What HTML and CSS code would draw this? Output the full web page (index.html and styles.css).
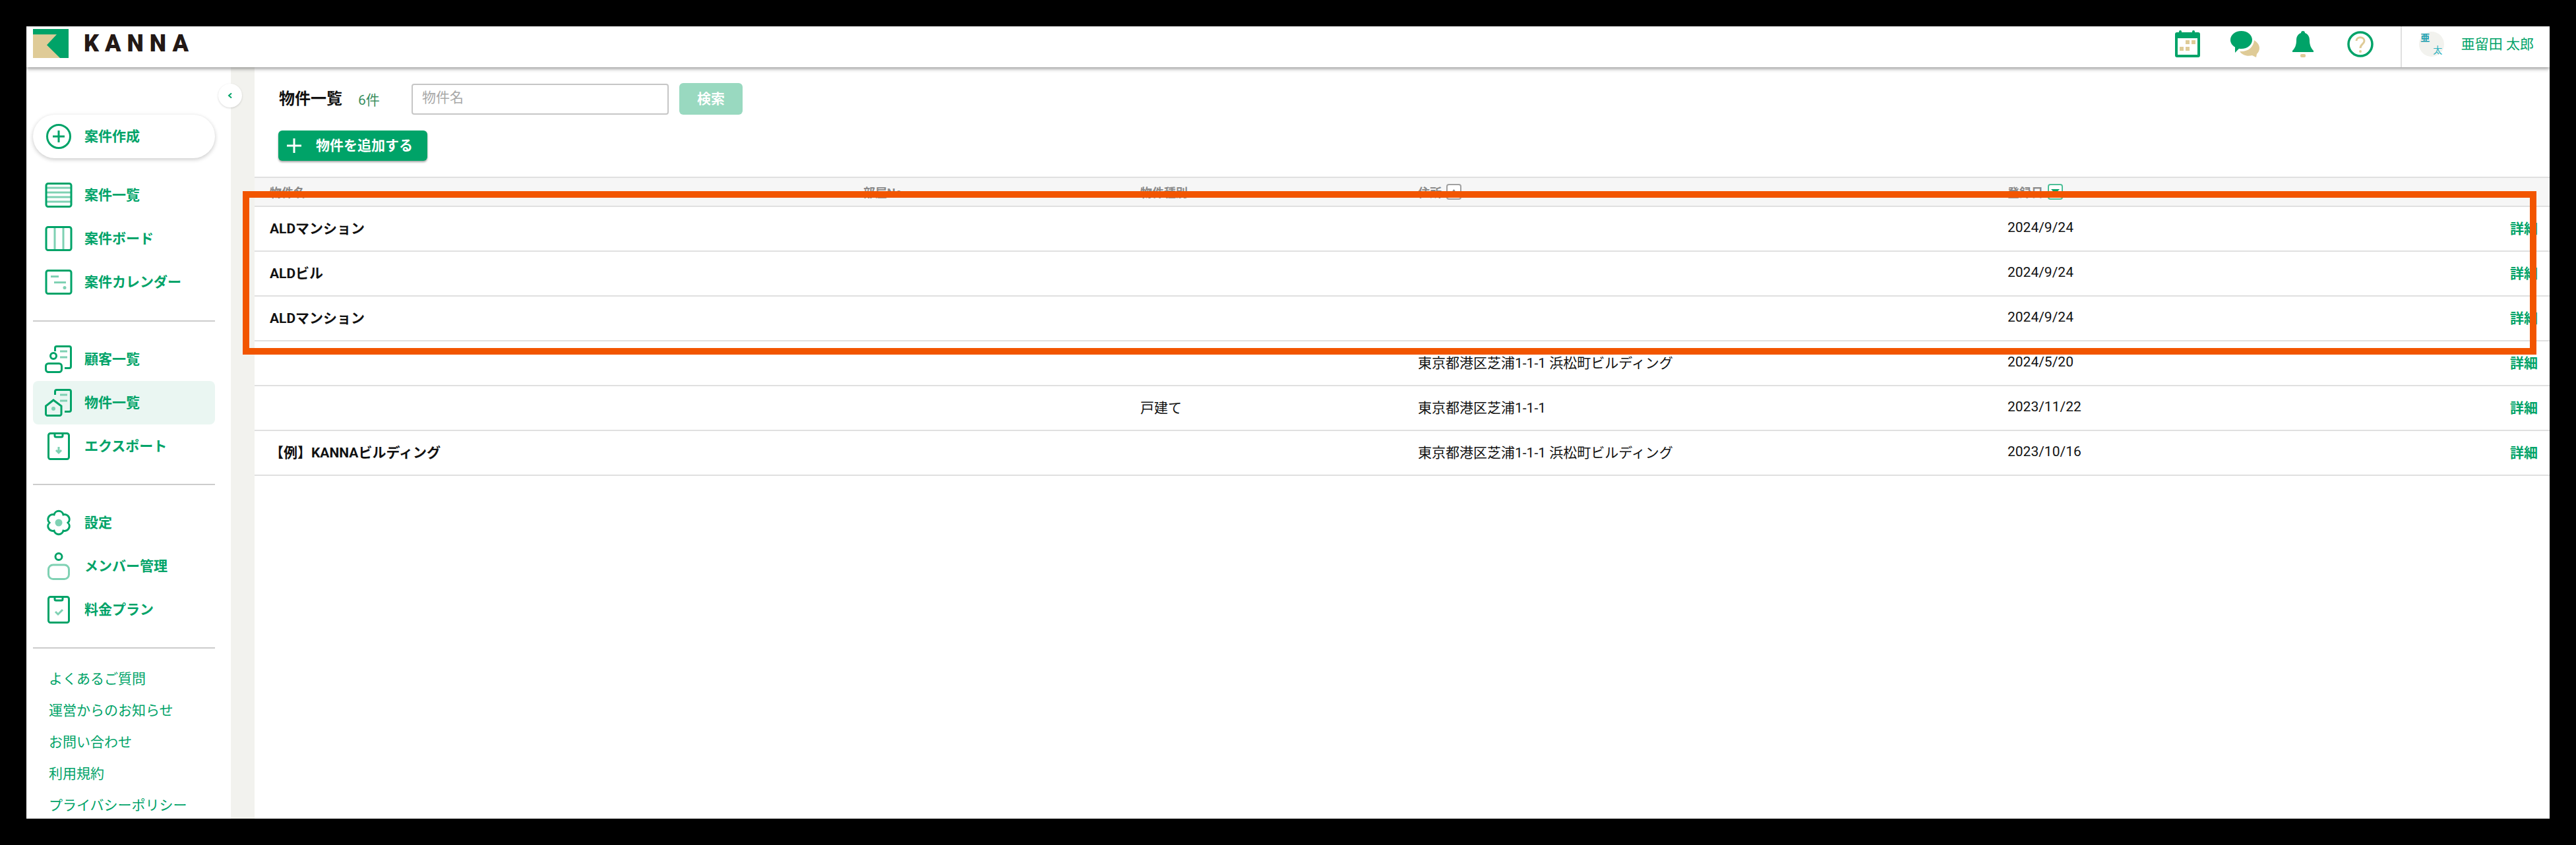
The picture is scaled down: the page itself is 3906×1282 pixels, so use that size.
FILE: index.html
```html
<!DOCTYPE html>
<html lang="ja">
<head>
<meta charset="utf-8">
<title>物件一覧 - KANNA</title>
<link rel="stylesheet" href="styles.css">
</head>
<body>
<div class="frame">
  <header class="topbar">
    <div class="brand">
      <svg class="logo" viewBox="0 0 54 44"><rect width="54" height="44" fill="#00a368"/><polygon points="0,8.3 36,8.3 21,24.3 41,44 0,44" fill="#dfcb97"/></svg>
      <span class="wordmark">KANNA</span>
    </div>
    <div class="top-actions">
      <div class="hslot">
        <svg class="h-cal" viewBox="0 0 38 41"><rect x="6" y="0" width="4" height="6" rx="2" fill="#00a368"/><rect x="26" y="0" width="4" height="6" rx="2" fill="#00a368"/><rect x="0" y="3" width="38" height="38" rx="3" fill="#00a368"/><rect x="4" y="12" width="30" height="25" fill="#fff"/><rect x="16" y="15" width="6" height="6" fill="#dfcb97"/><rect x="25" y="15" width="6" height="6" fill="#dfcb97"/><rect x="7" y="25" width="6" height="6" fill="#dfcb97"/><rect x="16" y="25" width="6" height="6" fill="#dfcb97"/></svg>
      </div>
      <div class="hslot">
        <svg class="h-chat" viewBox="0 0 44 40"><path d="M36 14 C42 18 44 22 44 26 C44 30 42 33 40 35 L39 40 L33 37 C26 39 18 37 14 31 C26 32 35 25 36 14Z" fill="#dfcb97"/><path d="M16.500 0 C26 0 33 6 33 13.500 C33 21 26 27 16.500 27 C15 27 14 27 13 26.800 L7 33 L7 24.500 C2.500 22 0 18 0 13.500 C0 6 7 0 16.500 0Z" fill="#00a368"/></svg>
      </div>
      <div class="hslot">
        <svg class="h-bell" viewBox="0 0 32 40"><path d="M16 0 C18 0 19 1 19 3 C24 5 26 9 26 14 C26 21 28 26 32 30 V32 H0 V30 C4 26 6 21 6 14 C6 9 8 5 13 3 C13 1 14 0 16 0Z" fill="#00a368"/><rect x="12" y="35" width="8" height="5" rx="2" fill="#dfcb97"/></svg>
      </div>
      <div class="hslot">
        <svg class="h-help" viewBox="0 0 40 40"><circle cx="20" cy="20" r="18" fill="none" stroke="#00a368" stroke-width="3.500"/><path d="M14 15 C14 8 26 8 26 15 C26 20 20 20 20 26" fill="none" stroke="#dfcb97" stroke-width="3"/><circle cx="20" cy="31" r="2" fill="#dfcb97"/></svg>
      </div>
      <div class="user">
        <div class="avatar"><span class="av-a">亜</span><span class="av-b">太</span></div>
        <span class="user-name">亜留田 太郎</span>
      </div>
    </div>
  </header>

  <div class="body-row">
    <aside class="sidebar">
      <a class="pill">
        <svg class="ic" viewBox="0 0 42 42"><circle cx="21" cy="21" r="17.500"/><path d="M21 12V30M12 21H30"/></svg>
        <span>案件作成</span>
      </a>
      <nav class="group">
        <a class="item"><svg class="ic" viewBox="0 0 42 42"><path class="lt" d="M3 10H39M3 17H39M3 24H39M3 31H39"/><rect x="2" y="3.500" width="38" height="35" rx="3"/></svg><span>案件一覧</span></a>
        <a class="item"><svg class="ic" viewBox="0 0 42 42"><path class="lt" d="M15 4V38M28 4V38"/><rect x="2" y="3.500" width="38" height="35" rx="3"/></svg><span>案件ボード</span></a>
        <a class="item"><svg class="ic" viewBox="0 0 42 42"><path class="lt" d="M9 12.500H21M14 21.500H32"/><circle class="fl" cx="30" cy="29.500" r="2.500"/><rect x="2" y="3.500" width="38" height="35" rx="3"/></svg><span>案件カレンダー</span></a>
      </nav>
      <div class="divider divider-first"></div>
      <nav class="group">
        <a class="item"><svg class="ic" viewBox="0 0 42 42"><path d="M15.500 9V4A2.500 2.500 0 0 1 18 1.500H37A2.500 2.500 0 0 1 39.500 4V32A2.500 2.500 0 0 1 37 34.500H30"/><path class="lt" d="M23 9H34M23 18H34"/><circle cx="13" cy="16" r="4.500"/><rect x="1.500" y="27.500" width="24" height="13" rx="4"/></svg><span>顧客一覧</span></a>
        <a class="item active"><svg class="ic" viewBox="0 0 42 42"><path d="M15.500 9V4A2.500 2.500 0 0 1 18 1.500H37A2.500 2.500 0 0 1 39.500 4V32A2.500 2.500 0 0 1 37 34.500H30"/><path class="lt" d="M23 9H34M23 18H34"/><path d="M13 17L25 26V38A2.500 2.500 0 0 1 22.500 40.500H4A2.500 2.500 0 0 1 1.500 38V26Z"/><circle class="fl" cx="13" cy="30" r="3"/></svg><span>物件一覧</span></a>
        <a class="item"><svg class="ic" viewBox="0 0 42 42"><rect x="5.500" y="1.500" width="31" height="39" rx="3"/><path d="M15 2V5A2 2 0 0 0 17 7H25A2 2 0 0 0 27 5V2"/><path class="lt" d="M21 22V31M17 27L21 31L25 27"/></svg><span>エクスポート</span></a>
      </nav>
      <div class="divider"></div>
      <nav class="group">
        <a class="item"><svg class="ic" viewBox="0 0 42 42"><path d="M14 8.880A7.200 7.200 0 0 1 28 8.880A7.200 7.200 0 0 1 35 21A7.200 7.200 0 0 1 28 33.120A7.200 7.200 0 0 1 14 33.120A7.200 7.200 0 0 1 7 21A7.200 7.200 0 0 1 14 8.880Z"/><circle class="fl" cx="21" cy="21" r="5.500"/></svg><span>設定</span></a>
        <a class="item"><svg class="ic" viewBox="0 0 42 42"><circle cx="21" cy="6.500" r="5"/><rect class="lt" x="5.500" y="19" width="31" height="21.500" rx="7"/></svg><span>メンバー管理</span></a>
        <a class="item"><svg class="ic" viewBox="0 0 42 42"><rect x="5.500" y="1.500" width="31" height="39" rx="3"/><path d="M15 2V5A2 2 0 0 0 17 7H25A2 2 0 0 0 27 5V2"/><path class="lt" d="M16 24L20 28L27 21"/></svg><span>料金プラン</span></a>
      </nav>
      <div class="divider divider-last"></div>
      <nav class="links">
        <a>よくあるご質問</a>
        <a>運営からのお知らせ</a>
        <a>お問い合わせ</a>
        <a>利用規約</a>
        <a>プライバシーポリシー</a>
      </nav>
    </aside>

    <div class="gutter"></div>

    <main class="content">
      <div class="toolbar">
        <h1 class="title">物件一覧</h1>
        <span class="count">6件</span>
        <input class="search" type="text" placeholder="物件名">
        <button class="search-btn" type="button">検索</button>
      </div>
      <button class="add-btn" type="button">
        <svg class="add-plus" viewBox="0 0 22 22"><path d="M11 0V22M0 11H22"/></svg>
        <span>物件を追加する</span>
      </button>

      <div class="table">
        <div class="row head">
          <div>物件名</div>
          <div>部屋No</div>
          <div>物件種別</div>
          <div class="sortable">住所<svg class="sort" viewBox="0 0 23 24"><rect x="1" y="1" width="21" height="22" rx="3"/><path class="tri" d="M11.500 8L16 14H7Z"/></svg></div>
          <div class="sortable">登録日<svg class="sort on" viewBox="0 0 23 24"><rect x="1" y="1" width="21" height="22" rx="3"/><path class="tri" d="M5 8H18L11.500 15Z"/></svg></div>
          <div></div>
        </div>
        <div class="row"><div class="name">ALDマンション</div><div></div><div></div><div></div><div>2024/9/24</div><div class="detail">詳細</div></div>
        <div class="row"><div class="name">ALDビル</div><div></div><div></div><div></div><div>2024/9/24</div><div class="detail">詳細</div></div>
        <div class="row"><div class="name">ALDマンション</div><div></div><div></div><div></div><div>2024/9/24</div><div class="detail">詳細</div></div>
        <div class="row"><div class="name"></div><div></div><div></div><div>東京都港区芝浦1-1-1 浜松町ビルディング</div><div>2024/5/20</div><div class="detail">詳細</div></div>
        <div class="row"><div class="name"></div><div></div><div>戸建て</div><div>東京都港区芝浦1-1-1</div><div>2023/11/22</div><div class="detail">詳細</div></div>
        <div class="row"><div class="name">【例】KANNAビルディング</div><div></div><div></div><div>東京都港区芝浦1-1-1 浜松町ビルディング</div><div>2023/10/16</div><div class="detail">詳細</div></div>
      </div>
    </main>
  </div>

  <button class="collapse" type="button" aria-label="閉じる"><svg viewBox="0 0 8 8"><path d="M6 0.500L2 4L6 7.500"/></svg></button>
  <div class="highlight"></div>
</div>
</body>
</html>
```
FILE: styles.css
```css
* { box-sizing: border-box; }
html, body { margin: 0; height: 100%; }
body {
  background: #000;
  padding: 40px;
  overflow: hidden;
  font-family: Roboto, "Noto Sans CJK JP", sans-serif;
  font-size: 21px;
  color: #111;
}
.frame {
  position: relative;
  width: 3826px;
  height: 1202px;
  background: #fff;
  overflow: hidden;
  display: flex;
  flex-direction: column;
}

/* top bar */
.topbar {
  position: relative;
  z-index: 2;
  height: 62px;
  flex: none;
  display: flex;
  justify-content: space-between;
  background: #fff;
  box-shadow: 0 2px 6px rgba(0, 0, 0, 0.45);
}
.brand {
  display: flex;
  align-items: center;
  gap: 23px;
  padding: 0 0 10px 10px;
}
.logo { width: 54px; height: 44px; display: block; }
.wordmark {
  font-family: Roboto, sans-serif;
  font-weight: 900;
  font-size: 36px;
  line-height: 1;
  letter-spacing: 9px;
  color: #231815;
}
.top-actions { display: flex; }
.hslot {
  width: 87.500px;
  display: flex;
  align-items: center;
  justify-content: center;
  padding-bottom: 9px;
}
.h-cal { width: 38px; height: 41px; }
.h-chat { width: 44px; height: 40px; }
.h-bell { width: 32px; height: 40px; }
.h-help { width: 40px; height: 40px; }
.user {
  margin-left: 17px;
  border-left: 2px solid #e0e0e0;
  display: flex;
  align-items: center;
  gap: 26px;
  padding: 0 24px 9px 26px;
}
.avatar {
  width: 38px;
  height: 38px;
  border-radius: 50%;
  background: #f2f2ee;
  display: grid;
  grid-template-columns: 1fr 1fr;
  grid-template-rows: 1fr 1fr;
  font-size: 14px;
  line-height: 1;
  color: #2fb3c0;
}
.av-a { grid-column: 1; grid-row: 1; font-weight: 700; color: #1e9fb0; align-self: center; justify-self: center; }
.av-b { grid-column: 2; grid-row: 2; align-self: center; justify-self: center; }
.user-name { color: #00a368; white-space: nowrap; padding-bottom: 4px; }

/* layout */
.body-row { flex: 1; display: flex; min-height: 0; }
.sidebar {
  width: 310px;
  flex: none;
  padding: 72px 24px 0 10px;
  overflow: hidden;
  color: #00a368;
  font-weight: 700;
}
.gutter { width: 36px; flex: none; background: #f2f2ee; }
.content { flex: 1; min-width: 0; padding-top: 24px; }

/* sidebar */
.ic { width: 42px; height: 42px; flex: none; fill: none; stroke: #00a368; stroke-width: 3; }
.ic .lt { stroke: #7fd1b3; }
.ic .fl { fill: #7fd1b3; stroke: none; }
.pill {
  height: 66px;
  border-radius: 33px;
  background: #fff;
  box-shadow: 0 2px 6px rgba(0, 0, 0, 0.22);
  display: flex;
  align-items: center;
  gap: 18px;
  padding-left: 18px;
  margin-bottom: 23px;
}
.pill span, .item span { padding-bottom: 5px; }
.item {
  height: 66px;
  display: flex;
  align-items: center;
  gap: 18px;
  padding-left: 18px;
  border-radius: 8px;
  white-space: nowrap;
}
.item.active { background: #eaf6f2; }
.divider { height: 2px; background: #cccccc; margin: 24px 0; }
.divider-first { margin-top: 25px; }
.divider-last { margin-bottom: 22px; }
.links { display: flex; flex-direction: column; font-weight: 400; }
.links a {
  height: 48px;
  padding: 0 0 4px 24px;
  display: flex;
  align-items: center;
  white-space: nowrap;
}

/* collapse button */
.collapse {
  position: absolute;
  left: 291px;
  top: 87px;
  z-index: 3;
  width: 36px;
  height: 36px;
  padding: 0;
  border: 0;
  border-radius: 50%;
  background: #fff;
  box-shadow: 0 1px 3px rgba(0, 0, 0, 0.16);
  display: flex;
  align-items: center;
  justify-content: center;
}
.collapse svg { width: 8px; height: 8px; fill: none; stroke: #00a368; stroke-width: 2; }

/* toolbar */
.toolbar { display: flex; align-items: center; height: 48px; padding-left: 37px; }
.title { margin: 0; font-size: 24px; font-weight: 700; line-height: 1; color: #111; }
.count { margin-left: 24px; color: #3a8f5f; width: 81px; flex: none; }
.search {
  width: 390px;
  height: 47px;
  border: 2px solid #c6c6c6;
  border-radius: 4px;
  padding: 0 14px 4px;
  font: inherit;
  outline: none;
}
.search::placeholder { color: #a8a8a8; opacity: 1; }
.search-btn {
  margin-left: 16px;
  width: 96px;
  height: 48px;
  border: 0;
  border-radius: 6px;
  background: #99d9c0;
  color: #fff;
  font: inherit;
  font-weight: 700;
  padding: 0 0 4px;
}
.add-btn {
  margin: 24px 0 24px 36px;
  width: 226px;
  height: 46px;
  border: 0;
  border-radius: 6px;
  background: #00a368;
  color: #fff;
  font: inherit;
  font-weight: 700;
  display: flex;
  align-items: center;
  gap: 22px;
  padding: 0 0 0 13px;
  box-shadow: 0 2px 3px rgba(0, 0, 0, 0.35);
}
.add-btn span { padding-bottom: 4px; }
.add-plus { width: 22px; height: 22px; fill: none; stroke: #fff; stroke-width: 3; flex: none; }

/* table */
.table { border-top: 2px solid #e0e0e0; }
.row {
  display: grid;
  grid-template-columns: 900px 420px 421px 894px 1fr 60px;
  align-items: center;
  height: 68px;
  padding: 0 18px 4px 23px;
  border-bottom: 2px solid #e0e0e0;
  white-space: nowrap;
}
.row.head {
  height: 44px;
  padding-bottom: 0;
  background: #f6f6f6;
  font-size: 18px;
  font-weight: 700;
  color: #8a8a8a;
}
.sortable { display: flex; align-items: center; gap: 7px; }
.sort { width: 23px; height: 24px; flex: none; }
.sort rect { fill: #fff; stroke: #a0a0a0; stroke-width: 2; }
.sort .tri { fill: #8a8a8a; }
.sort.on rect { stroke: #4cbf97; }
.sort.on .tri { fill: #00a368; }
.name { font-weight: 700; }
.detail { color: #00a368; font-weight: 700; text-align: right; }

/* annotation */
.highlight {
  position: absolute;
  left: 328px;
  top: 250px;
  width: 3478px;
  height: 248px;
  z-index: 4;
  border: 10px solid #f25500;
  pointer-events: none;
}
```
